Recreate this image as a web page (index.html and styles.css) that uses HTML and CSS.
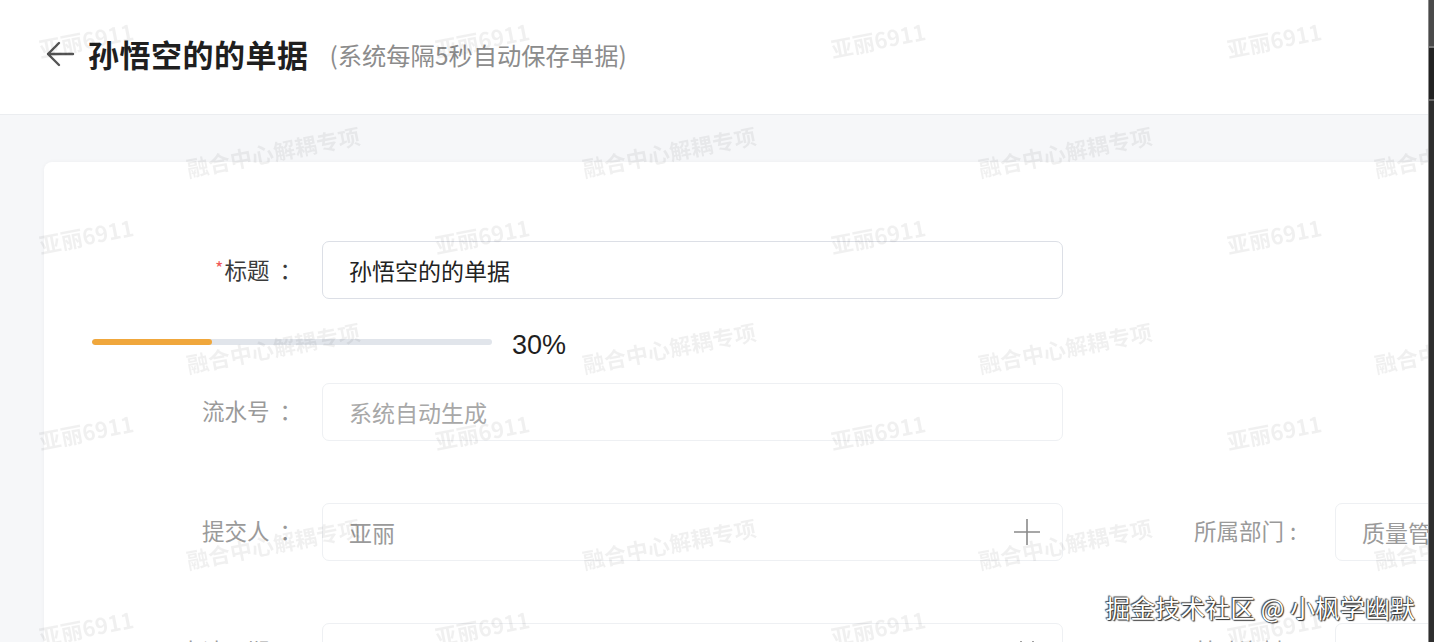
FILE: index.html
```html
<!DOCTYPE html>
<html lang="zh-CN">
<head>
<meta charset="utf-8">
<title>孙悟空的的单据</title>
<link rel="stylesheet" href="styles.css">
</head>
<body>
<div class="page">
  <div class="main">
    <header class="topbar">
      <svg class="back" width="30" height="28" viewBox="0 0 30 28" aria-hidden="true">
        <path d="M28 14H3M14 3L3 14l11 11" fill="none" stroke="#555" stroke-width="2.4" stroke-linecap="round" stroke-linejoin="round"/>
      </svg>
      <h1 class="title">孙悟空的的单据</h1>
      <span class="subtitle">(系统每隔5秒自动保存单据)</span>
    </header>
    <div class="content">
      <div class="card">
        <div class="form-row">
          <div class="label label-strong"><span class="req">*</span>标题<span class="colon">：</span></div>
          <div class="field field-active">孙悟空的的单据</div>
        </div>
        <div class="progress-row">
          <div class="bar"><div class="bar-fill" style="width:30%"></div></div>
          <span class="pct">30%</span>
        </div>
        <div class="form-row">
          <div class="label">流水号<span class="colon">：</span></div>
          <div class="field field-muted placeholder">系统自动生成</div>
        </div>
        <div class="form-row">
          <div class="label">提交人<span class="colon">：</span></div>
          <div class="field field-muted muted-text">
            <span>亚丽</span>
            <svg class="field-icon" width="28" height="28" viewBox="0 0 28 28" aria-hidden="true">
              <path d="M14 1v26M1 14h26" stroke="#8a8a8a" stroke-width="1.6" fill="none"/>
            </svg>
          </div>
          <div class="label label-right">所属部门<span class="colon-half">:</span></div>
          <div class="field field-muted field-side muted-text">质量管理部</div>
        </div>
        <div class="form-row">
          <div class="label">申请日期<span class="colon">：</span></div>
          <div class="field field-muted muted-text">
            <span></span>
            <svg class="field-icon" width="28" height="28" viewBox="0 0 28 28" aria-hidden="true">
              <path d="M8 3v6M20 3v6M3 7h22v18H3zM3 12h22" stroke="#8a8a8a" stroke-width="1.6" fill="none"/>
            </svg>
          </div>
          <div class="label label-right">基础资料<span class="colon-half">:</span></div>
          <div class="field field-muted field-side muted-text">点击选择</div>
        </div>
      </div>
    </div>
    <div class="watermark" aria-hidden="true">
      <div class="wm-tile"><span class="wm wm-a">亚丽6911</span><span class="wm wm-b">融合中心解耦专项</span></div>
      <div class="wm-tile"><span class="wm wm-a">亚丽6911</span><span class="wm wm-b">融合中心解耦专项</span></div>
      <div class="wm-tile"><span class="wm wm-a">亚丽6911</span><span class="wm wm-b">融合中心解耦专项</span></div>
      <div class="wm-tile"><span class="wm wm-a">亚丽6911</span><span class="wm wm-b">融合中心解耦专项</span></div>
      <div class="wm-tile"><span class="wm wm-a">亚丽6911</span><span class="wm wm-b">融合中心解耦专项</span></div>
      <div class="wm-tile"><span class="wm wm-a">亚丽6911</span><span class="wm wm-b">融合中心解耦专项</span></div>
      <div class="wm-tile"><span class="wm wm-a">亚丽6911</span><span class="wm wm-b">融合中心解耦专项</span></div>
      <div class="wm-tile"><span class="wm wm-a">亚丽6911</span><span class="wm wm-b">融合中心解耦专项</span></div>
      <div class="wm-tile"><span class="wm wm-a">亚丽6911</span><span class="wm wm-b">融合中心解耦专项</span></div>
      <div class="wm-tile"><span class="wm wm-a">亚丽6911</span><span class="wm wm-b">融合中心解耦专项</span></div>
      <div class="wm-tile"><span class="wm wm-a">亚丽6911</span><span class="wm wm-b">融合中心解耦专项</span></div>
      <div class="wm-tile"><span class="wm wm-a">亚丽6911</span><span class="wm wm-b">融合中心解耦专项</span></div>
      <div class="wm-tile"><span class="wm wm-a">亚丽6911</span><span class="wm wm-b">融合中心解耦专项</span></div>
      <div class="wm-tile"><span class="wm wm-a">亚丽6911</span><span class="wm wm-b">融合中心解耦专项</span></div>
      <div class="wm-tile"><span class="wm wm-a">亚丽6911</span><span class="wm wm-b">融合中心解耦专项</span></div>
      <div class="wm-tile"><span class="wm wm-a">亚丽6911</span><span class="wm wm-b">融合中心解耦专项</span></div>
    </div>
    <div class="credit">掘金技术社区 @ 小枫学幽默</div>
  </div>
  <div class="edge"></div>
</div>
</body>
</html>
```
FILE: styles.css
```css
* { box-sizing: border-box; }
html, body {
  margin: 0;
  padding: 0;
}
body {
  width: 1434px;
  height: 642px;
  overflow: hidden;
  font-family: "Noto Sans CJK SC", "Noto Sans", sans-serif;
  background: #f6f7f9;
}
.page {
  display: flex;
  width: 1434px;
  height: 642px;
}
.main {
  position: relative;
  flex: 0 0 1428px;
  height: 642px;
  overflow: hidden;
  display: flex;
  flex-direction: column;
  background: #f6f7f9;
}
.edge {
  flex: 0 0 6px;
  background: linear-gradient(to bottom, #4a4a4a 0, #4a4a4a 46px, #777 46px, #777 48px, #222 48px, #222 99px, #666 99px, #666 101px, #2e2e2e 101px);
  border-left: 1px solid #8a8a8a;
}
.topbar {
  flex: 0 0 115px;
  display: flex;
  align-items: center;
  padding: 0 0 6px 45px;
  background: #fff;
  border-bottom: 1px solid #ebedf0;
}
.back {
  display: block;
  margin-right: 13px;
}
.title {
  margin: 0;
  font-size: 31px;
  font-weight: 700;
  color: #1f1f1f;
  line-height: 40px;
  letter-spacing: 0.5px;
}
.subtitle {
  margin-left: 21px;
  font-size: 24.3px;
  color: #8c8c8c;
  line-height: 40px;
  padding-top: 2px;
}
.content {
  flex: 1;
  padding: 47px 0 0 44px;
}
.card {
  width: 1420px;
  height: 600px;
  background: #fff;
  border-radius: 8px;
  box-shadow: 0 0 4px rgba(0, 0, 0, 0.04);
  padding-top: 79px;
}
.form-row {
  display: flex;
  align-items: center;
  height: 58px;
  margin-bottom: 62px;
}
.form-row:first-child {
  margin-bottom: 28px;
}
.label {
  flex: 0 0 278px;
  padding-right: 20px;
  text-align: right;
  font-size: 22.5px;
  color: #9a9a9a;
  line-height: 30px;
  padding-bottom: 4px;
  white-space: nowrap;
}
.colon {
  margin-left: 10px;
}
.colon-half {
  margin-left: 6px;
}
.label-strong {
  color: #3a3a3a;
}
.req {
  color: #f05a5a;
  font-size: 18px;
  vertical-align: 4px;
  margin-right: 1px;
}
.label-right {
  flex: 0 0 272px;
  padding-right: 28px;
  text-align: left;
  padding-left: 131px;
}
.field {
  flex: 0 0 741px;
  height: 58px;
  display: flex;
  align-items: center;
  justify-content: space-between;
  padding: 0 21px 0 26px;
  border-radius: 7px;
  font-size: 23px;
  color: #222;
  background: #fff;
}
.field-active {
  border: 1.5px solid #dcdfe6;
}
.field-muted {
  border: 1px solid #eef0f3;
}
.field-side {
  flex: 0 0 300px;
  white-space: nowrap;
  overflow: hidden;
  justify-content: flex-start;
}
.placeholder {
  color: #a8a8a8;
}
.muted-text {
  color: #9a9a9a;
}
.field-icon {
  display: block;
}
.progress-row {
  display: flex;
  align-items: center;
  height: 30px;
  padding-left: 48px;
  margin-bottom: 26px;
}
.bar {
  width: 400px;
  height: 6px;
  border-radius: 3px;
  background: #e1e5eb;
  overflow: hidden;
}
.bar-fill {
  height: 100%;
  background: #f0a73c;
  border-radius: 3px;
}
.pct {
  margin-left: 20px;
  font-family: "Liberation Sans", Arial, sans-serif;
  font-size: 27px;
  color: #1f1f1f;
  line-height: 30px;
  padding-top: 6px;
}
.watermark {
  position: absolute;
  left: 0;
  top: 0;
  width: 1600px;
  height: 800px;
  display: grid;
  grid-template-columns: repeat(4, 396px);
  grid-auto-rows: 196px;
  pointer-events: none;
  z-index: 5;
  filter: blur(0.6px);
}
.wm-tile {
  display: flex;
  flex-direction: column;
  align-items: flex-start;
  padding-top: 24px;
}
.wm {
  display: inline-block;
  font-size: 22px;
  font-weight: 700;
  line-height: 30px;
  color: rgba(0, 0, 0, 0.06);
  transform: rotate(-11deg);
  white-space: nowrap;
}
.wm-a {
  margin-left: 38px;
}
.wm-b {
  margin-left: 185px;
  margin-top: 82px;
}
.credit {
  position: absolute;
  right: 13px;
  bottom: 19px;
  z-index: 6;
  font-size: 25px;
  line-height: 32px;
  color: #fff;
  text-shadow: 0 0 1px #000, 1px 1px 1px #333, -1px -1px 1px #555;
}
```
